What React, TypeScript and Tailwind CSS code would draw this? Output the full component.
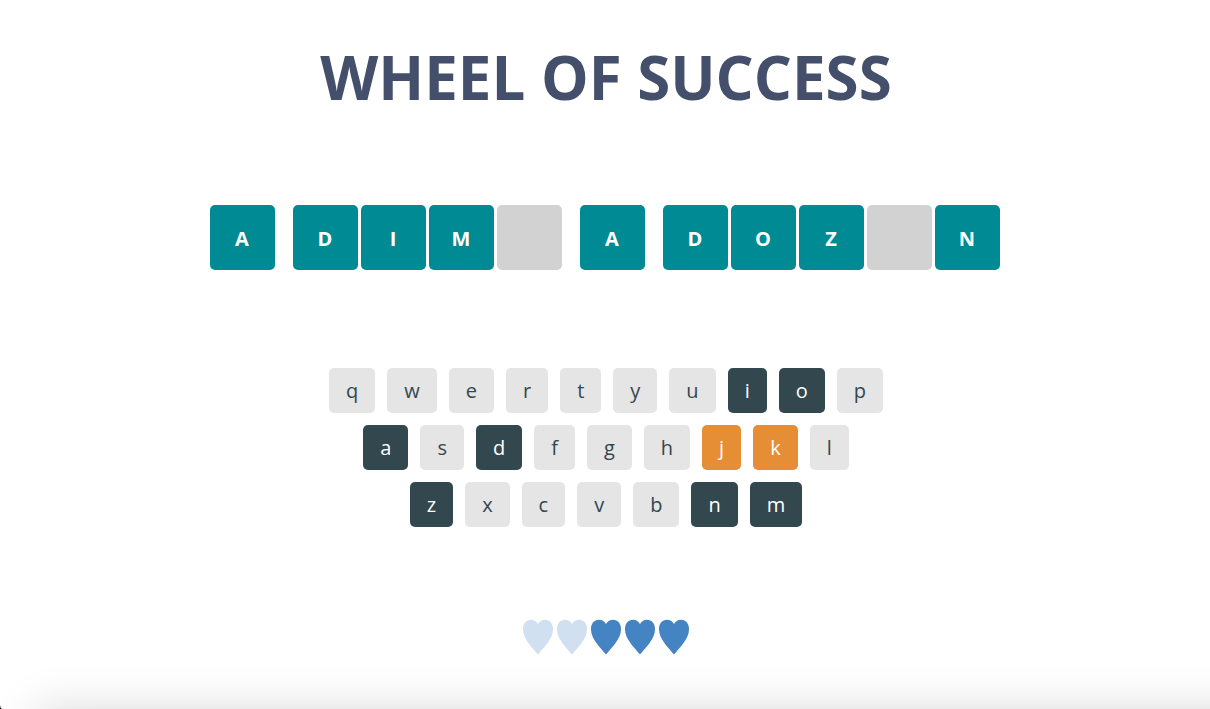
type KeyState = 'idle' | 'hit' | 'miss';

const PHRASE = 'a dime a dozen';
const GUESSED = 'adimozn';
const MISSED = 'jk';
const ROWS = ['qwertyuiop', 'asdfghjkl', 'zxcvbnm'];
const LIVES = [false, false, true, true, true];

const KEY_STYLES: Record<KeyState, string> = {
  idle: 'bg-[#e5e5e5] text-[#33474f]',
  hit: 'bg-[#33474f] text-white',
  miss: 'bg-[#e58e35] text-white',
};

function keyState(letter: string): KeyState {
  if (GUESSED.includes(letter)) return 'hit';
  if (MISSED.includes(letter)) return 'miss';
  return 'idle';
}

function Phrase() {
  return (
    <ul aria-label="Phrase" className="mt-[86px] flex flex-wrap justify-center gap-[18px]">
      {PHRASE.split(' ').map((word, w) => (
        <li key={w} className="flex gap-[3px]">
          {word.split('').map((letter, i) => {
            const shown = GUESSED.includes(letter);
            return (
              <span
                key={i}
                className={`flex size-[65px] items-center justify-center rounded-[5px] pt-[2px] pr-px text-xl font-bold uppercase text-white ${
                  shown ? 'bg-[#008a93]' : 'bg-[#d2d2d2]'
                }`}
              >
                {shown ? letter : ''}
              </span>
            );
          })}
        </li>
      ))}
    </ul>
  );
}

function Keyboard() {
  return (
    <div className="mt-[98px] flex flex-col gap-3">
      {ROWS.map((row) => (
        <div key={row} className="flex justify-center gap-3 pl-[2px]">
          {row.split('').map((letter) => (
            <button
              key={letter}
              type="button"
              disabled={keyState(letter) !== 'idle'}
              className={`h-[45px] rounded-[5px] px-[17px] text-xl ${KEY_STYLES[keyState(letter)]}`}
            >
              {letter}
            </button>
          ))}
        </div>
      ))}
    </div>
  );
}

function Hearts() {
  return (
    <ol aria-label="Lives" className="mt-[92px] flex justify-center gap-1 pl-[2px]">
      {LIVES.map((alive, i) => (
        <li key={i}>
          <svg
            viewBox="0 0 30 36"
            className={`h-9 w-[30px] ${alive ? 'fill-[#4484c2]' : 'fill-[#d0e0f0]'}`}
            aria-hidden="true"
          >
            <path d="M15 5C13.2 2 10.8.8 8 .8 3.2.8 0 4.4 0 10.2 0 20.2 9.5 28.5 15 35.6 20.5 28.5 30 20.2 30 10.2 30 4.4 26.8.8 22 .8 19.2.8 16.8 2 15 5Z" />
          </svg>
        </li>
      ))}
    </ol>
  );
}

export default function App() {
  return (
    <main className="relative min-h-screen overflow-hidden bg-white pt-[35px] font-['Open_Sans',sans-serif]">
      <h1 className="pl-[2px] text-center text-[60px] leading-[84px] font-bold text-[#444f6b]">WHEEL OF SUCCESS</h1>
      <Phrase />
      <Keyboard />
      <Hearts />
      <div className="pointer-events-none absolute top-full -right-24 left-9 h-24 shadow-[0_0_46px_rgba(0,0,0,0.15)]" />
      <svg viewBox="0 0 3 4" className="absolute bottom-0 left-0 h-1 w-[3px]" aria-hidden="true">
        <path d="M0 0Q0 3 2 4H0Z" />
      </svg>
    </main>
  );
}
